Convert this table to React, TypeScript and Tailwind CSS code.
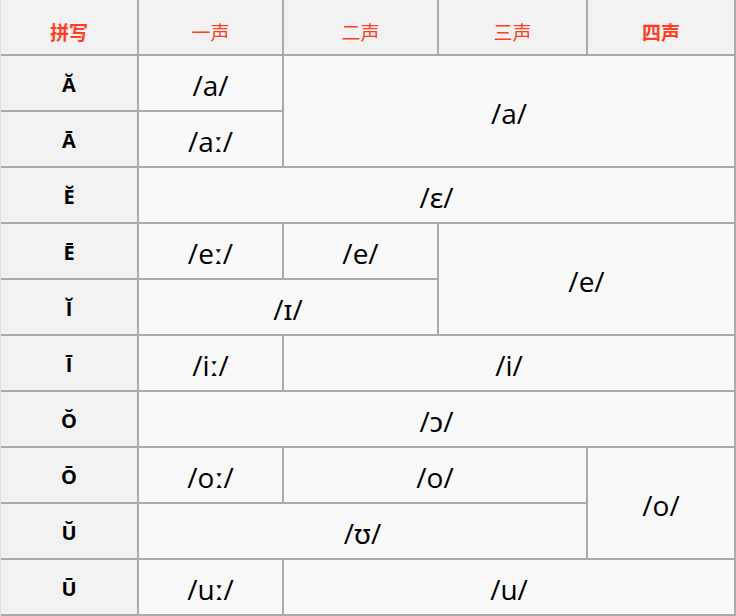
import React from "react";

const ph = "flex items-center justify-center pt-[4px] bg-[#f9f9f9] text-[28px] text-black [font-family:'Open_Sans','Noto_Sans',sans-serif]";
const lab = "flex items-center justify-center pt-[4px] bg-[#f2f2f2] text-[20px] font-bold text-black [font-family:'Open_Sans','Noto_Sans',sans-serif]";
const hd = "flex items-center justify-center bg-[#f2f2f2] pt-[10px] text-[19px] text-[#ff3d22] [font-family:'Noto_Sans_CJK_SC',serif]";

export default function App() {
  return (
    <div className="w-[736px] h-[616px] bg-[#ababab] pr-[2px] pb-[2px] border-l border-l-[#dedede]">
      <div className="grid h-full grid-cols-[136px_143px_153px_147px_146px] grid-rows-[54px_repeat(10,54px)] gap-[2px]">
        <div className={hd + " font-bold"}>拼写</div>
        <div className={hd}>一声</div>
        <div className={hd}>二声</div>
        <div className={hd}>三声</div>
        <div className={hd + " font-bold"}>四声</div>

        <div className={lab}>Ă</div>
        <div className={ph}>/a/</div>
        <div className={ph + " col-span-3 row-span-2"}>/a/</div>

        <div className={lab}>Ā</div>
        <div className={ph}>/aː/</div>

        <div className={lab}>Ĕ</div>
        <div className={ph + " col-span-4"}>/ɛ/</div>

        <div className={lab}>Ē</div>
        <div className={ph}>/eː/</div>
        <div className={ph}>/e/</div>
        <div className={ph + " col-span-2 row-span-2"}>/e/</div>

        <div className={lab}>Ĭ</div>
        <div className={ph + " col-span-2"}>/ɪ/</div>

        <div className={lab}>Ī</div>
        <div className={ph}>/iː/</div>
        <div className={ph + " col-span-3"}>/i/</div>

        <div className={lab}>Ŏ</div>
        <div className={ph + " col-span-4"}>/ɔ/</div>

        <div className={lab}>Ō</div>
        <div className={ph}>/oː/</div>
        <div className={ph + " col-span-2"}>/o/</div>
        <div className={ph + " row-span-2"}>/o/</div>

        <div className={lab}>Ŭ</div>
        <div className={ph + " col-span-3"}>/ʊ/</div>

        <div className={lab}>Ū</div>
        <div className={ph}>/uː/</div>
        <div className={ph + " col-span-3"}>/u/</div>
      </div>
    </div>
  );
}
